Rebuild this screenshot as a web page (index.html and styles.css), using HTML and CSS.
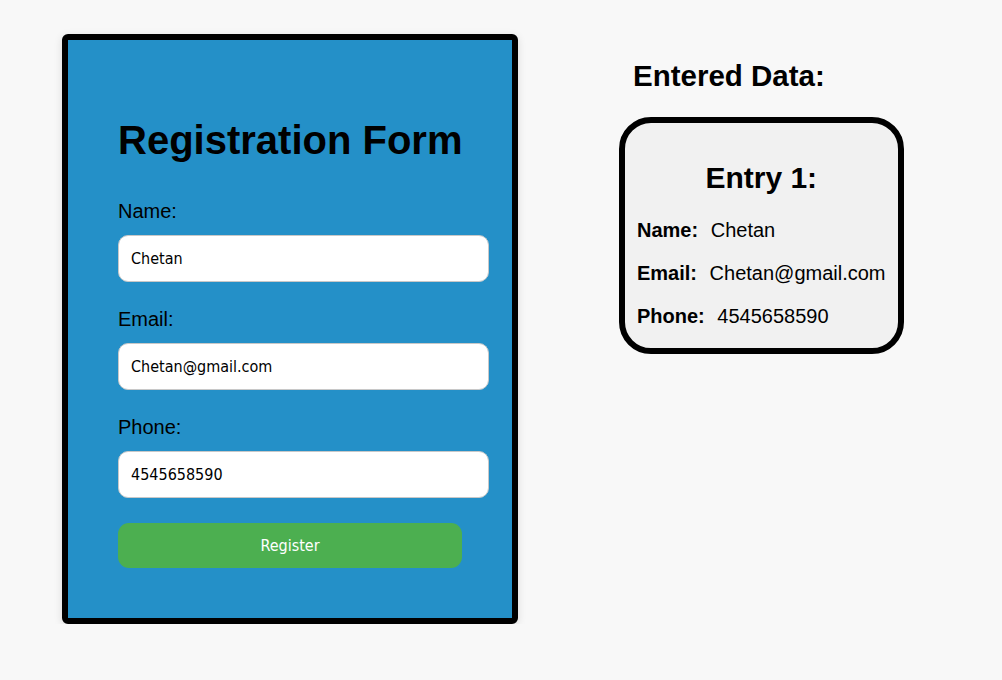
FILE: index.html
```html
<!DOCTYPE html>
<html>
<head>
<meta charset="utf-8">
<link rel="stylesheet" href="styles.css">
</head>
<body>
<div class="page">
  <form class="form-card">
    <h1 class="form-title">Registration Form</h1>
    <label class="field-label">Name:</label>
    <input class="field-input" type="text" value="Chetan">
    <label class="field-label">Email:</label>
    <input class="field-input" type="text" value="Chetan@gmail.com">
    <label class="field-label">Phone:</label>
    <input class="field-input" type="text" value="4545658590">
    <button class="submit-btn" type="button">Register</button>
  </form>
  <div class="data-col">
    <h2 class="data-title">Entered Data:</h2>
    <div class="entry-card">
      <h3 class="entry-title">Entry 1:</h3>
      <p class="entry-row"><strong class="entry-key">Name:</strong> Chetan</p>
      <p class="entry-row"><strong class="entry-key">Email:</strong> Chetan@gmail.com</p>
      <p class="entry-row"><strong class="entry-key">Phone:</strong> 4545658590</p>
    </div>
  </div>
</div>
</body>
</html>
```
FILE: styles.css
```css
html, body {
  margin: 0;
  padding: 0;
  background: #f8f8f8;
  font-family: "Liberation Sans", Arial, sans-serif;
  color: #000;
}

.page {
  display: flex;
  align-items: flex-start;
  padding: 34px 0 0 62px;
  gap: 101px;
}

.form-card {
  width: 344px;
  padding: 50px;
  background: #2490c8;
  border: 6px solid #000;
  border-radius: 6px;
  box-shadow: 0 2px 8px rgba(0, 0, 0, 0.12);
  display: flex;
  flex-direction: column;
  align-items: flex-start;
}

.form-title {
  font-size: 40px;
  font-weight: bold;
  line-height: 46px;
  margin: 27px 0 37px;
  white-space: nowrap;
}

.field-label {
  display: block;
  font-size: 20px;
  line-height: 23px;
  margin: 0 0 12px;
}

.field-input {
  box-sizing: content-box;
  width: 345px;
  height: 21px;
  padding: 12px;
  margin: 0 0 26px;
  border: 1px solid #c8c8c8;
  border-radius: 10px;
  background: #fff;
  font-family: "DejaVu Sans Condensed", "DejaVu Sans", sans-serif;
  font-stretch: condensed;
  font-size: 16px;
  color: #000;
  outline: none;
}

.submit-btn {
  width: 344px;
  height: 45px;
  margin: -1px 0 0;
  border: none;
  border-radius: 11px;
  background: #4caf50;
  color: #fff;
  font-family: "DejaVu Sans Condensed", "DejaVu Sans", sans-serif;
  font-stretch: condensed;
  font-size: 16px;
  cursor: pointer;
}

.data-col {
  display: flex;
  flex-direction: column;
  align-items: flex-start;
}

.data-title {
  font-size: 29.5px;
  font-weight: bold;
  line-height: 33px;
  margin: 25px 0 25px 14px;
}

.entry-card {
  background: #f1f1f1;
  border: 6px solid #000;
  border-radius: 32px;
  padding: 1px 12px 0;
  text-align: left;
}

.entry-title {
  font-size: 30px;
  font-weight: bold;
  line-height: 34px;
  text-align: center;
  margin: 37px 0 24px;
}

.entry-row {
  font-size: 20px;
  line-height: 23px;
  margin: 0 0 20px;
  white-space: nowrap;
}

.entry-key {
  margin-right: 7px;
}
```
